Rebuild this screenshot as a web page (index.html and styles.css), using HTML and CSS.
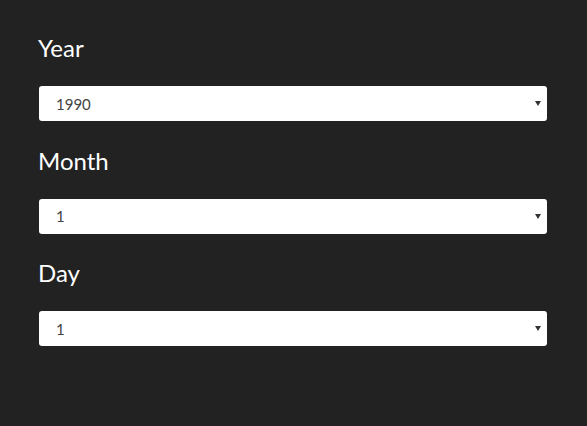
FILE: index.html
```html
<!DOCTYPE html>
<html lang="en">
<head>
  <meta charset="UTF-8" />
  <meta name="viewport" content="width=device-width, initial-scale=1.0"/>
  <title>Date of Birth</title>
  <link rel="stylesheet" href="styles.css">
</head>
<body>
  <form class="container">
    <div class="field">
      <label for="year">Year</label>
      <div class="select-wrap">
        <select id="year">
          <option>1990</option>
          <option>1991</option>
          <option>1992</option>
        </select>
      </div>
    </div>

    <div class="field">
      <label for="month">Month</label>
      <div class="select-wrap">
        <select id="month">
          <option>1</option>
          <option>2</option>
          <option>3</option>
        </select>
      </div>
    </div>

    <div class="field">
      <label for="day">Day</label>
      <div class="select-wrap">
        <select id="day">
          <option>1</option>
          <option>2</option>
          <option>3</option>
        </select>
      </div>
    </div>
  </form>
</body>
</html>
```

FILE: styles.css
```css
body {
  font-family: 'Lato', sans-serif;
  margin: 0;
  background: #222222;
}

.container {
  padding: 30px 40px 30px 39px;
  display: flex;
  flex-direction: column;
  gap: 21.5px;
}

.field label {
  display: block;
  color: #ffffff;
  font-size: 24px;
  line-height: 36px;
  margin-left: -1px;
  margin-bottom: 20px;
}

.select-wrap {
  position: relative;
}

.select-wrap select {
  -webkit-appearance: none;
  appearance: none;
  width: 100%;
  height: 35px;
  padding: 0 17px;
  font-family: 'Lato', sans-serif;
  font-size: 15px;
  color: #444444;
  background: #ffffff;
  border: none;
  border-radius: 3px;
  outline: none;
}

.select-wrap::after {
  content: "";
  position: absolute;
  right: 6px;
  top: 15px;
  border-left: 3px solid transparent;
  border-right: 3px solid transparent;
  border-top: 5px solid #333333;
  pointer-events: none;
}
```
